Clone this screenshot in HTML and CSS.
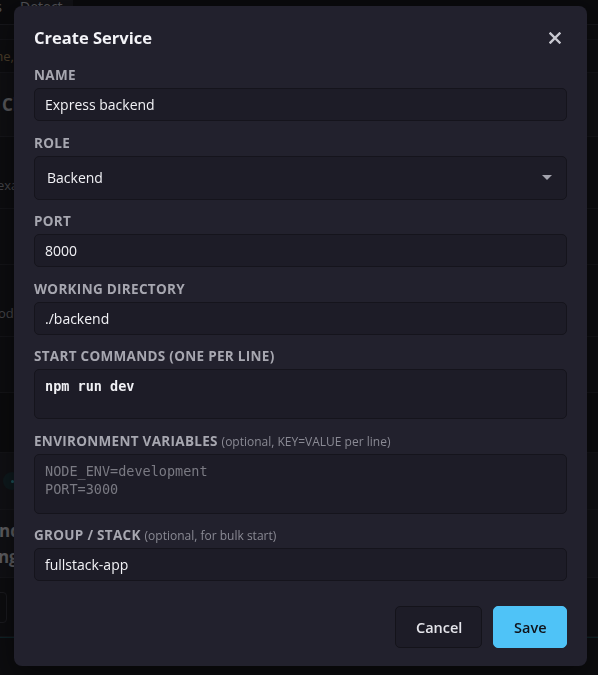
FILE: index.html
```html
<!DOCTYPE html>
<html lang="en">
<head>
<meta charset="utf-8">
<title>Create Service</title>
<link rel="stylesheet" href="styles.css">
</head>
<body>
<div class="app">
  <div class="tabs">
    <span class="tab tab-cut">Logs</span>
    <span class="tab active">Detect</span>
  </div>
  <div class="gap-row"></div>
  <div class="search-row"><span class="hint">name, role</span></div>
  <div class="section"><span class="section-title">Claude</span></div>
  <div class="row low"><span class="dim cut-ai">openai.example.dev</span></div>
  <div class="row short"></div>
  <div class="row low"><span class="dim cut-od">node</span></div>
  <div class="row short"></div>
  <div class="row darker"></div>
  <div class="card"><span class="dot"><span class="dot-core"></span></span></div>
  <div class="card tall"><span class="card-name">Backend<br>Running</span></div>
  <div class="row btn-row"><span class="ghost-btn"></span></div>
  <div class="row last"></div>
</div>

<div class="overlay">
  <div class="modal">
    <div class="modal-head">
      <h2 class="modal-title">Create Service</h2>
      <button class="close" aria-label="Close">
        <svg width="12" height="12" viewBox="0 0 12 12"><path d="M1.5 1.5 L10.5 10.5 M10.5 1.5 L1.5 10.5" stroke="#c9c9d1" stroke-width="2.4" stroke-linecap="square"/></svg>
      </button>
    </div>

    <div class="field">
      <label class="label">NAME</label>
      <div class="input">Express backend</div>
    </div>
    <div class="field">
      <label class="label">ROLE</label>
      <div class="select"><span>Backend</span><span class="caret"></span></div>
    </div>
    <div class="field">
      <label class="label">PORT</label>
      <div class="input">8000</div>
    </div>
    <div class="field">
      <label class="label">WORKING DIRECTORY</label>
      <div class="input">./backend</div>
    </div>
    <div class="field">
      <label class="label">START COMMANDS (ONE PER LINE)</label>
      <div class="textarea cmd">npm run dev</div>
    </div>
    <div class="field">
      <label class="label">ENVIRONMENT VARIABLES <span class="opt">(optional, KEY=VALUE per line)</span></label>
      <div class="textarea env placeholder">NODE_ENV=development<br>PORT=3000</div>
    </div>
    <div class="field">
      <label class="label">GROUP / STACK <span class="opt">(optional, for bulk start)</span></label>
      <div class="input">fullstack-app</div>
    </div>

    <div class="actions">
      <button class="btn cancel">Cancel</button>
      <button class="btn save">Save</button>
    </div>
  </div>
</div>
</body>
</html>
```

FILE: styles.css
```css
* { box-sizing: border-box; }
html, body { margin: 0; padding: 0; }
body {
  width: 598px;
  height: 675px;
  overflow: hidden;
  background: #1c1c22;
  font-family: "Open Sans", "Noto Sans", sans-serif;
  color: #e8e8ee;
}

/* background app (dimmed by overlay) */
.app { display: flex; flex-direction: column; width: 598px; height: 675px; overflow: hidden; }
.tabs { height: 25px; flex: none; display: flex; gap: 8px; font-size: 14px; color: #b8b8c2; background: #17171c; border-bottom: 1px solid #32323c; align-items: flex-start; }
.tab { line-height: 14px; height: 25px; padding-right: 10px; margin-top: -4px; padding-top: 4px; }
.tab-cut { margin-left: -28px; }
.tab.active { background: #26262e; }
.gap-row { height: 15px; flex: none; border-bottom: 1px solid #2a2a33; }
.search-row { height: 33px; flex: none; border-bottom: 1px solid #2e2e38; display: flex; align-items: center; font-size: 13px; overflow: hidden; }
.hint { color: #a98a5e; margin-left: -24px; white-space: nowrap; }
.section { height: 64px; flex: none; background: #222229; border-bottom: 1px solid #30303a; display: flex; align-items: center; }
.section-title { font-weight: 700; font-size: 17px; color: #c4c4cc; margin-left: 2px; }
.row { height: 72px; flex: none; border-bottom: 1px solid #2c2c35; display: flex; align-items: center; font-size: 13px; overflow: hidden; }
.row.low { align-items: flex-end; padding-bottom: 14px; }
.row.short { height: 56px; }
.row.darker { height: 60px; background: #18181d; }
.dim { color: #9a9aa4; white-space: nowrap; }
.cut-ai { margin-left: -48px; }
.cut-od { margin-left: -10px; }
.card { height: 57px; flex: none; background: #24242c; border-bottom: 1px solid #2e2e37; display: flex; align-items: center; padding-left: 3px; }
.card.tall { height: 68px; padding-left: 0; overflow: hidden; }
.dot { width: 18px; height: 18px; border-radius: 50%; background: #1f3840; display: flex; align-items: center; justify-content: center; }
.dot-core { width: 3px; height: 3px; background: #3fb6c8; border-radius: 50%; }
.card-name { font-weight: 700; font-size: 17px; color: #d0d0d8; line-height: 26px; margin-left: -52px; white-space: nowrap; }
.btn-row { height: 59px; }
.ghost-btn { width: 47px; height: 31px; margin-left: -40px; border: 1px solid #3a3a44; border-radius: 4px; }
.last { border-bottom: none; border-top: 1px solid #1f4f58; }

/* overlay + modal */
.overlay {
  position: fixed;
  inset: 0;
  background: rgba(0, 0, 0, 0.55);
  display: flex;
  align-items: flex-start;
  justify-content: flex-start;
  padding: 6px 0 0 14px;
}
.modal {
  width: 573px;
  background: #22212d;
  border-radius: 8px;
  padding: 20px 20px 18px 20px;
  box-shadow: 0 10px 30px rgba(0,0,0,0.5);
}
.modal-head { display: flex; align-items: center; justify-content: space-between; margin-bottom: 17px; height: 24px; }
.modal-title { margin: 0; font-size: 16.5px; font-weight: 700; color: #f4f4f8; line-height: 24px; }
.close { background: none; border: none; padding: 0; margin-right: 6px; width: 12px; height: 12px; display: flex; }

.field { display: flex; flex-direction: column; margin-bottom: 13.5px; }
.label { font-size: 13.5px; font-weight: 700; color: #a7a7b0; line-height: 17px; margin-bottom: 4px; letter-spacing: 0.3px; white-space: nowrap; }
.opt { font-weight: 400; font-size: 12px; color: #8a8a94; letter-spacing: 0; }
.input {
  height: 33px;
  background: #1d1c27;
  border: 1px solid #15141c;
  border-radius: 5px;
  padding: 0 10px;
  display: flex;
  align-items: center;
  font-size: 14px;
  color: #f2f2f6;
}
.select {
  height: 44px;
  background: #1d1c27;
  border: 1px solid #15141c;
  border-radius: 5px;
  padding: 0 14px 0 12px;
  display: flex;
  align-items: center;
  justify-content: space-between;
  font-size: 14px;
  color: #f2f2f6;
}
.caret { width: 0; height: 0; border-left: 5px solid transparent; border-right: 5px solid transparent; border-top: 5px solid #a3a3ad; }
.textarea {
  background: #1d1c27;
  border: 1px solid #15141c;
  border-radius: 5px;
  padding: 7px 10px;
  font-family: "DejaVu Sans Mono", "Liberation Mono", monospace;
  font-size: 13.5px;
  line-height: 18px;
}
.textarea.cmd { height: 50px; color: #f0f0f4; font-weight: 700; }
.textarea.env { height: 60px; }
.placeholder { color: #7a7a83; }

.actions { display: flex; justify-content: flex-end; gap: 11px; margin-top: 25px; }
.btn {
  height: 42px;
  border-radius: 5px;
  font-family: "Open Sans", "Noto Sans", sans-serif;
  font-size: 14.5px;
  font-weight: 600;
  padding: 0 20px;
}
.cancel { background: #1d1c27; border: 1px solid #14131a; color: #e4e4ea; width: 87px; }
.save { background: #4fc3f7; border: 1px solid #4fc3f7; color: #10131a; width: 74px; }
```
